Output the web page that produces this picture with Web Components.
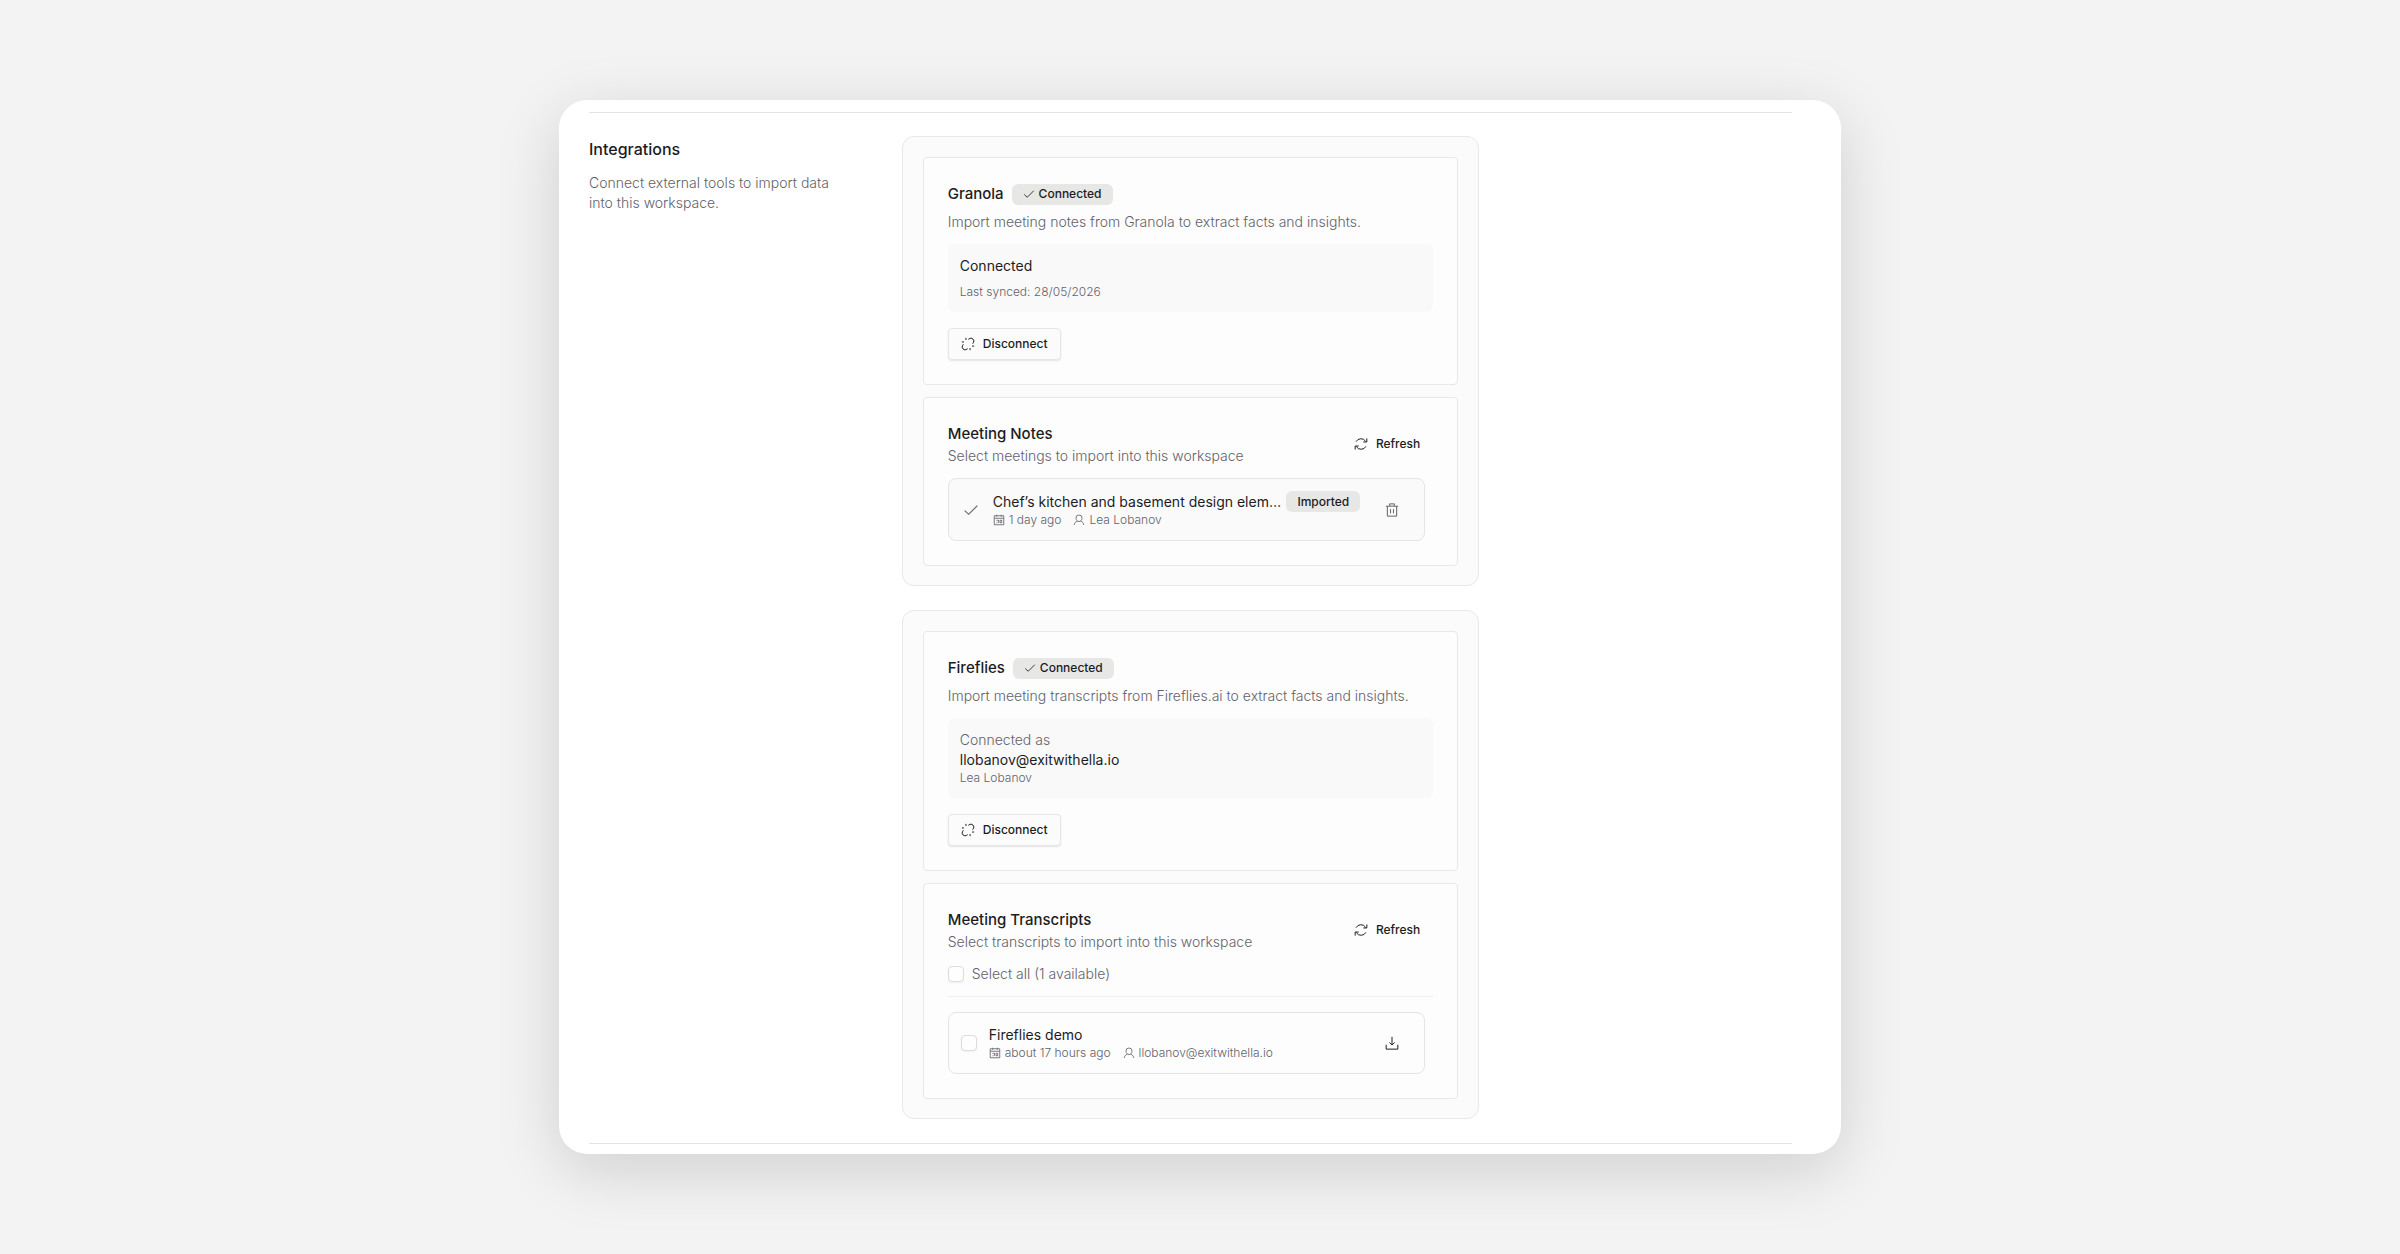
<!DOCTYPE html>
<html lang="en">
<head>
<meta charset="utf-8">
<title>Workspace settings – Integrations</title>
<style>
  body {
    margin: 0;
    min-height: 100vh;
    background: #f3f3f3;
    color: #1c1c1f;
    font-family: Inter, "Liberation Sans", sans-serif;
    font-size: 14px;
    line-height: 20px;
    --muted: #62626a;
    --line: #e8e8ea;
  }
</style>
</head>
<body>
<settings-page>
  <settings-section heading="Integrations" description="Connect external tools to import data into this workspace.">
    <integration-panel>
      <ui-card>
        <card-title heading="Granola" status="Connected" description="Import meeting notes from Granola to extract facts and insights."></card-title>
        <info-box>
          <info-line kind="strong">Connected</info-line>
          <info-line kind="small" spaced>Last synced: 28/05/2026</info-line>
        </info-box>
        <ui-button icon="unlink" variant="outline">Disconnect</ui-button>
      </ui-card>
      <ui-card>
        <list-title heading="Meeting Notes" description="Select meetings to import into this workspace"></list-title>
        <meeting-row name="Chef’s kitchen and basement design elem…" when="1 day ago" who="Lea Lobanov" imported></meeting-row>
      </ui-card>
    </integration-panel>
    <integration-panel>
      <ui-card>
        <card-title heading="Fireflies" status="Connected" description="Import meeting transcripts from Fireflies.ai to extract facts and insights."></card-title>
        <info-box>
          <info-line>Connected as</info-line>
          <info-line kind="strong">llobanov@exitwithella.io</info-line>
          <info-line kind="small">Lea Lobanov</info-line>
        </info-box>
        <ui-button icon="unlink" variant="outline">Disconnect</ui-button>
      </ui-card>
      <ui-card>
        <list-title heading="Meeting Transcripts" description="Select transcripts to import into this workspace"></list-title>
        <select-all label="Select all (1 available)"></select-all>
        <meeting-row name="Fireflies demo" when="about 17 hours ago" who="llobanov@exitwithella.io"></meeting-row>
      </ui-card>
    </integration-panel>
  </settings-section>
</settings-page>

<script>
const BASE = `*{box-sizing:border-box}h2,h3,p{margin:0;font-weight:inherit}`;

function define(name, render) {
  customElements.define(name, class extends HTMLElement {
    connectedCallback() {
      if (this.shadowRoot) return;
      this.attachShadow({ mode: 'open' }).innerHTML = render(this);
    }
  });
}
const attr = (el, name) => el.getAttribute(name) || '';

const ICONS = {
  check: '<path d="M2.5 13l6 5.500L21.500 5.500"/>',
  unlink: '<path d="M20 11.500l1-1.500a5 5 0 0 0-.5-6.500 5 5 0 0 0-6.500-.5l-1.500 1M4 12.500L3 14a5 5 0 0 0 .5 6.500 5 5 0 0 0 6.500.5l1.500-1M8.500 1.500V5M1.500 8.500H5M15.500 19v3.500M19 15.500h3.500"/>',
  refresh: '<path d="M3.500 8A9.500 9.500 0 0 1 20 7.500M22 2.500V8.500h-6M20.500 16A9.500 9.500 0 0 1 4 16.500M2 21.500v-6h6"/>',
  trash: '<path d="M1.500 5.500h21M4 5.500V22.500h16V5.500M8 5V1.500h8V5M9.500 10.500v7M14.500 10.500v7"/>',
  download: '<path d="M12 1.500v14M7.500 11l4.500 4.500 4.500-4.500M2 15v7.500h20V15"/>',
  calendar: '<path d="M2.500 3.500h19v18h-19zM2.500 8.500h19M7.500 1.500v4M16.500 1.500v4M7 12.500h4v5M7 17.500h2M14 12.500h3.500v5H14z"/>',
  user: '<path d="M12 2a6 6 0 0 1 6 6.500c0 3.500-2.500 6.500-6 6.500s-6-3-6-6.500A6 6 0 0 1 12 2zM8.500 14.500C5 15.500 3 18 2.500 22M15.500 14.500c3.500 1 5.500 3.500 6 7.500"/>'
};

define('ui-icon', el => `<style>
  :host{display:block;flex:none;width:${attr(el, 'size')}px;height:${attr(el, 'size')}px}
  svg{display:block;width:100%;height:100%}
</style><svg viewBox="0 0 24 24" fill="none" stroke="currentColor" stroke-width="1.7" aria-hidden="true">${ICONS[attr(el, 'name')]}</svg>`);

define('settings-page', () => `<style>${BASE}
  :host{display:block;padding:100px 24px}
  main{max-width:1282px;margin:0 auto;padding:12px 49px 10px 30px;border-radius:28px;background:#fff;
    box-shadow:0 16px 64px rgba(0,0,0,.15)}
</style><main><slot></slot></main>`);

define('settings-section', el => `<style>${BASE}
  :host{display:grid;grid-template-columns:1fr 2fr 1fr;column-gap:24px;padding:23px 0 24px;
    border-top:1px solid #e4e4e6;border-bottom:1px solid #e4e4e6}
  h2{font-size:16px;font-weight:500;line-height:26px;margin-bottom:11px}
  p{color:var(--muted);font-weight:300;max-width:260px}
  .panels{display:flex;flex-direction:column;gap:24px;min-width:0}
</style>
<header><h2>${attr(el, 'heading')}</h2><p>${attr(el, 'description')}</p></header>
<div class="panels"><slot></slot></div>`);

define('integration-panel', () => `<style>${BASE}
  :host{display:flex;flex-direction:column;gap:12px;padding:20px 20px 19px;border:1px solid var(--line);
    border-radius:12px;background:#fbfbfb;box-sizing:border-box}
</style><slot></slot>`);

define('ui-card', () => `<style>
  :host{display:block;padding:24px;border:1px solid var(--line);border-radius:4px;background:#fdfdfd;box-sizing:border-box}
</style><slot></slot>`);

define('ui-badge', () => `<style>
  :host{display:inline-flex;align-items:center;gap:4px;height:21px;padding:0 11px;border-radius:6px;flex:none;
    background:#e7e7e5;font-size:12px;line-height:16px;font-weight:500;box-sizing:border-box}
</style><slot></slot>`);

define('card-title', el => `<style>${BASE}
  :host{display:block;margin-bottom:12px}
  .top{display:flex;align-items:center;gap:8px;height:24px;margin-bottom:6px}
  h3{font-size:15px;line-height:24px;font-weight:500}
  p{color:var(--muted);font-weight:300}
</style>
<div class="top"><h3>${attr(el, 'heading')}</h3><ui-badge><ui-icon name="check" size="12"></ui-icon>${attr(el, 'status')}</ui-badge></div>
<p>${attr(el, 'description')}</p>`);

define('info-box', () => `<style>
  :host{display:block;padding:12px;margin-bottom:16px;border-radius:6px;background:#f9f9f9}
</style><slot></slot>`);

define('info-line', () => `<style>
  :host{display:block;color:var(--muted);font-weight:300}
  :host([kind=strong]){color:inherit;font-weight:400}
  :host([kind=small]){font-size:12px;line-height:16px}
  :host([spaced]){margin-top:8px}
</style><slot></slot>`);

define('ui-button', el => `<style>
  :host{display:block}
  button{display:flex;align-items:center;gap:8px;height:32px;padding:0 12px;margin:0;border:1px solid transparent;border-radius:4px;
    background:none;color:inherit;font:500 12px/16px Inter,"Liberation Sans",sans-serif}
  :host([variant=outline]) button{border-color:#e7e7e9;background:#fbfbfb;box-shadow:0 1px 2px rgba(0,0,0,.1)}
</style><button type="button"><ui-icon name="${attr(el, 'icon')}" size="14"></ui-icon><slot></slot></button>`);

define('list-title', el => `<style>${BASE}
  :host{display:flex;align-items:center;justify-content:space-between;margin-bottom:12px}
  h3{font-size:15px;line-height:24px;font-weight:500}
  p{color:var(--muted);font-weight:300}
</style>
<div><h3>${attr(el, 'heading')}</h3><p>${attr(el, 'description')}</p></div>
<ui-button icon="refresh">Refresh</ui-button>`);

const CHECKBOX = `input{appearance:none;flex:none;width:16px;height:16px;margin:0;border:1px solid #dcdcdf;border-radius:4px;
  background:#fefefe;box-shadow:0 1px 2px rgba(0,0,0,.06)}`;

define('select-all', el => `<style>${BASE}${CHECKBOX}
  :host{display:block;padding-bottom:12px;margin-bottom:15px;border-bottom:1px solid #f0f0f1}
  label{display:flex;align-items:center;gap:8px;color:var(--muted);font-weight:300}
</style><label><input type="checkbox">${attr(el, 'label')}</label>`);

define('meta-item', el => `<style>
  :host{display:flex;align-items:center;gap:4px}
</style><ui-icon name="${attr(el, 'icon')}" size="12"></ui-icon><slot></slot>`);

define('meeting-row', el => {
  const imported = el.hasAttribute('imported');
  return `<style>${BASE}${CHECKBOX}
  :host{display:flex;align-items:center;gap:12px;padding:12px;margin-right:8px;border:1px solid #e4e4e6;border-radius:8px;box-sizing:border-box}
  :host([imported]){background:#fafafa}
  .state{display:flex;justify-content:center;width:20px;color:var(--muted)}
  .body{flex:1;min-width:0}
  .name{display:flex;align-items:center;justify-content:space-between}
  .name span,.name label{font-weight:400;white-space:nowrap}
  .meta{display:flex;gap:12px;color:var(--muted);font-size:12px;line-height:16px;font-weight:300}
  button{display:flex;align-items:center;justify-content:center;width:40px;height:32px;padding:0;margin:0;border:0;background:none;color:inherit}
  :host([imported]) button{color:var(--muted)}
</style>
${imported ? '<div class="state"><ui-icon name="check" size="16"></ui-icon></div>' : '<input type="checkbox" id="pick">'}
<div class="body">
  <div class="name">${imported ? `<span>${attr(el, 'name')}</span><ui-badge>Imported</ui-badge>` : `<label for="pick">${attr(el, 'name')}</label>`}</div>
  <div class="meta"><meta-item icon="calendar">${attr(el, 'when')}</meta-item><meta-item icon="user">${attr(el, 'who')}</meta-item></div>
</div>
<button type="button" aria-label="${imported ? 'Remove' : 'Import'}"><ui-icon name="${imported ? 'trash' : 'download'}" size="14"></ui-icon></button>`;
});
</script>
</body>
</html>
